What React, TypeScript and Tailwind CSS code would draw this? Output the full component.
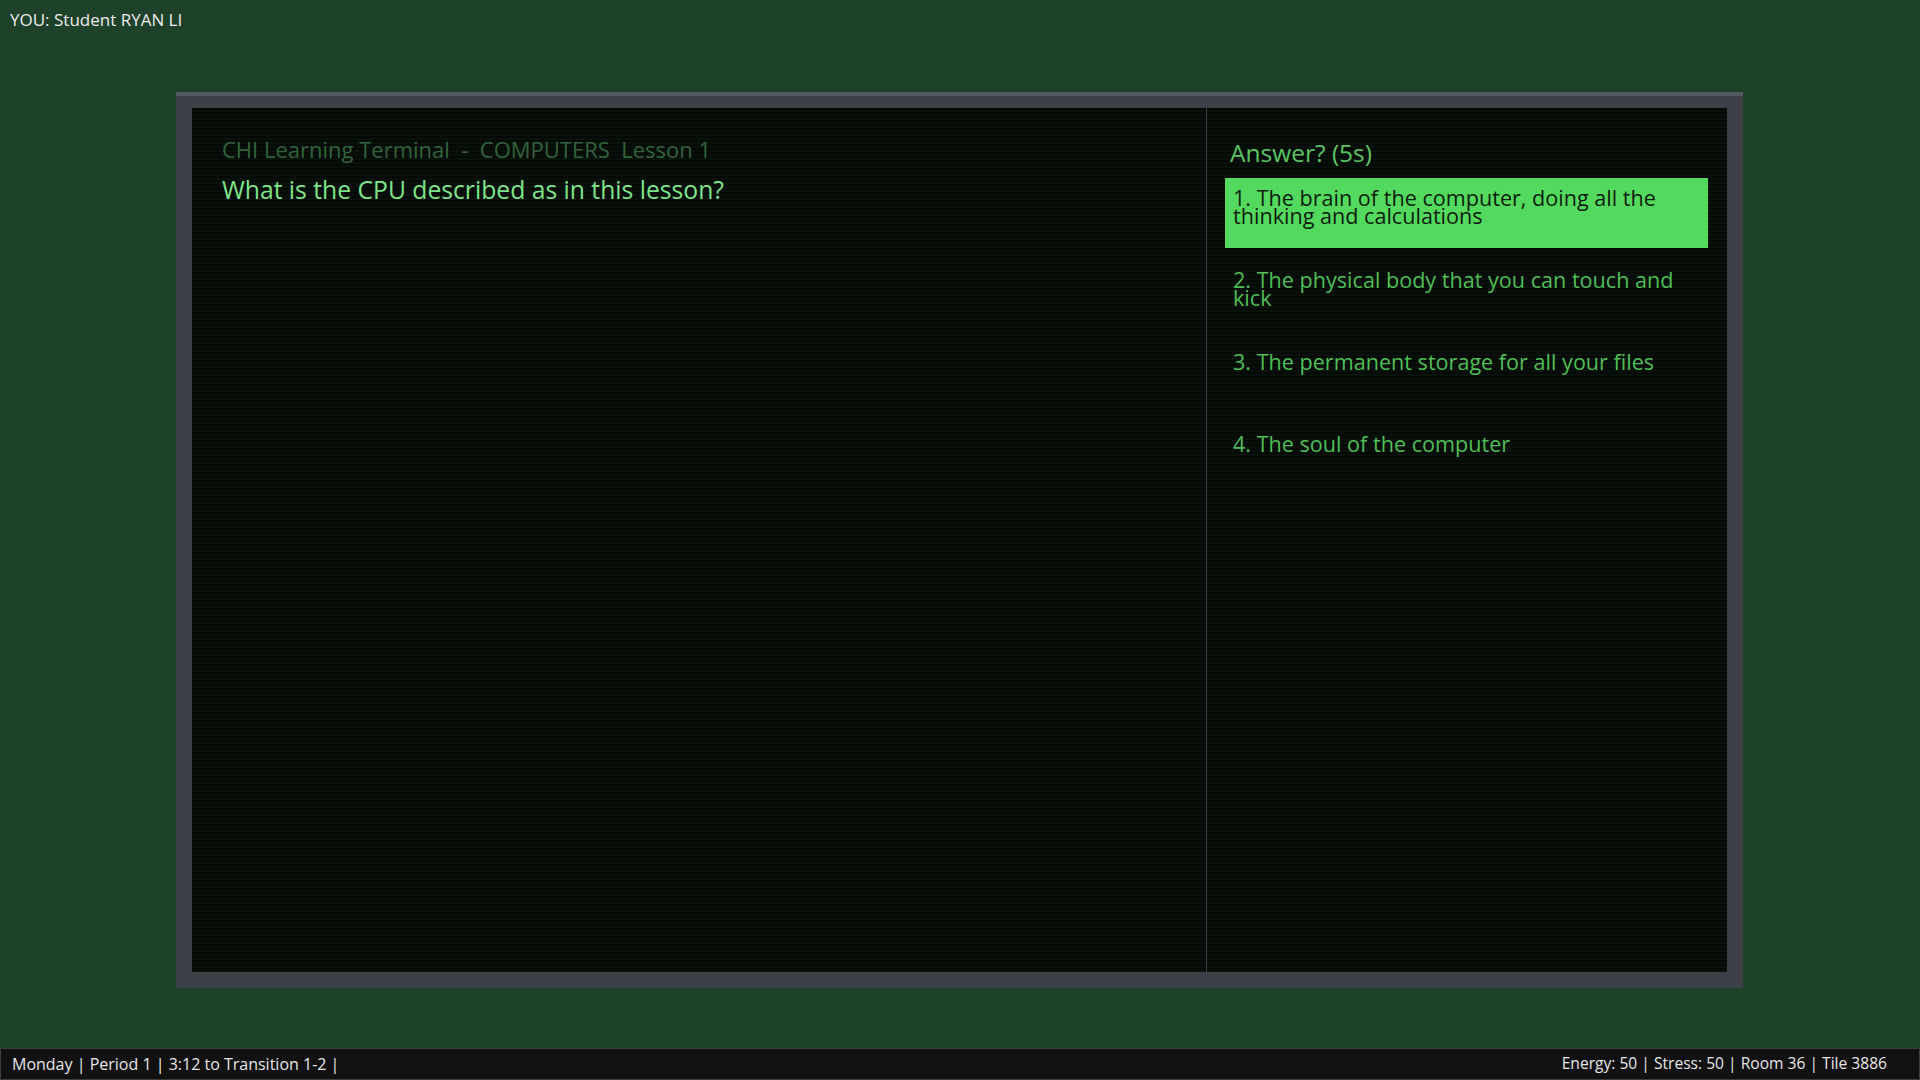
const OPTIONS = [
  "The brain of the computer, doing all the thinking and calculations",
  "The physical body that you can touch and kick",
  "The permanent storage for all your files",
  "The soul of the computer",
];

const FONT = "font-['Open_Sans','Noto_Sans',sans-serif]";

export default function App() {
  const selected = 0;

  return (
    <div className={`flex h-screen w-full flex-col bg-[#1e412a] ${FONT}`}>
      <div className="h-[92px] px-[10px] pt-[7px] text-[17px] text-[#ececec]">
        YOU: Student RYAN LI
      </div>

      {/* terminal bezel */}
      <div className="ml-[176px] flex h-[896px] w-[1567px] border-t-4 border-[#56585f] bg-[#3e4048] px-4 pb-4 pt-3">
        <div className="flex flex-1 bg-[repeating-linear-gradient(to_bottom,#040a06_0px,#040a06_2px,#08120b_2px,#08120b_4px)]">
          {/* lesson pane */}
          <div className="w-[1014px] pl-[30px] pt-[28px]">
            <div className="text-[22px] leading-[26px] text-[#33633a]">
              CHI Learning Terminal&nbsp;&nbsp;-&nbsp;&nbsp;COMPUTERS&nbsp;&nbsp;Lesson 1
            </div>
            <div className="mt-[13px] text-[24.7px] leading-[30px] text-[#7fe489]">
              What is the CPU described as in this lesson?
            </div>
          </div>

          {/* answer pane */}
          <div className="flex flex-1 flex-col border-l border-[#3a3e41] pl-[18px] pr-[19px] pt-[31px]">
            <div className="pl-[5px] text-[24.5px] leading-[28px] text-[#5cc462]">Answer? (5s)</div>
            <div className="mt-[11px] flex flex-col gap-[12px]">
              {OPTIONS.map((text, i) => (
                <div
                  key={text}
                  className={
                    i === selected
                      ? "h-[70px] bg-[#53d95d] px-[8px] pt-[11px] text-[21.6px] leading-[18px] text-[#0c1d0e]"
                      : "h-[70px] px-[8px] pt-[11px] text-[21.6px] leading-[18px] text-[#4fbe56]"
                  }
                >
                  {i + 1}. {text}
                </div>
              ))}
            </div>
          </div>
        </div>
      </div>

      <div className="flex-1" />

      {/* status bar */}
      <div className="flex h-[32px] items-center justify-between border border-[#3d3d3d] bg-[#111111] pl-[11px] pr-[32px] text-[#e6e6e6]">
        <span className="text-[16px]">Monday | Period 1 | 3:12 to Transition 1-2 |</span>
        <span className="text-[15.6px]">Energy: 50 | Stress: 50 | Room 36 | Tile 3886</span>
      </div>
    </div>
  );
}
